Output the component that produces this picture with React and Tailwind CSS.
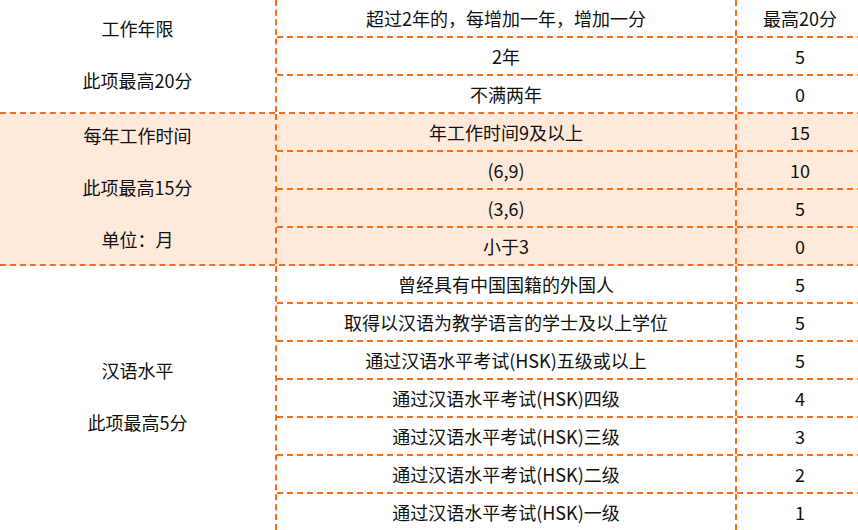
const groups = [
  {
    label: ["工作年限", "此项最高20分"],
    shaded: false,
    rows: [
      ["超过2年的，每增加一年，增加一分", "最高20分"],
      ["2年", "5"],
      ["不满两年", "0"],
    ],
  },
  {
    label: ["每年工作时间", "此项最高15分", "单位：月"],
    shaded: true,
    rows: [
      ["年工作时间9及以上", "15"],
      ["(6,9)", "10"],
      ["(3,6)", "5"],
      ["小于3", "0"],
    ],
  },
  {
    label: ["汉语水平", "此项最高5分"],
    shaded: false,
    rows: [
      ["曾经具有中国国籍的外国人", "5"],
      ["取得以汉语为教学语言的学士及以上学位", "5"],
      ["通过汉语水平考试(HSK)五级或以上", "5"],
      ["通过汉语水平考试(HSK)四级", "4"],
      ["通过汉语水平考试(HSK)三级", "3"],
      ["通过汉语水平考试(HSK)二级", "2"],
      ["通过汉语水平考试(HSK)一级", "1"],
    ],
  },
];

export default function App() {
  return (
    <div className="w-[858px] h-[530px] overflow-hidden bg-white">
      <div
        className="w-[863px] text-[18px] text-[#111]"
        style={{ fontFamily: '"Noto Sans CJK SC", "Noto Sans", sans-serif' }}
      >
        {groups.map((g, gi) => (
          <div
            key={gi}
            className={
              "flex " +
              (g.shaded ? "bg-[#ffe9db] " : "") +
              (gi < groups.length - 1 ? "border-b-2 border-dashed border-[#ff6a17]" : "")
            }
          >
            {/* label cell */}
            <div className="w-[277px] shrink-0 border-r-2 border-dashed border-[#ff6a17] flex flex-col items-center justify-center gap-[28px] leading-[24px] pb-[5px]">
              {g.label.map((t) => (
                <div key={t}>{t}</div>
              ))}
            </div>
            {/* rows */}
            <div className="flex-1">
              {g.rows.map(([desc, score], ri) => {
                const last = ri === g.rows.length - 1;
                return (
                  <div
                    key={ri}
                    className={
                      last
                        ? "flex h-[36px]"
                        : "flex h-[38px] border-b-2 border-dashed border-[#ff6a17]"
                    }
                  >
                    <div className="w-[460px] shrink-0 border-r-2 border-dashed border-[#ff6a17] flex items-center justify-center">
                      {desc}
                    </div>
                    <div className="flex-1 flex items-center justify-center">{score}</div>
                  </div>
                );
              })}
            </div>
          </div>
        ))}
      </div>
    </div>
  );
}
